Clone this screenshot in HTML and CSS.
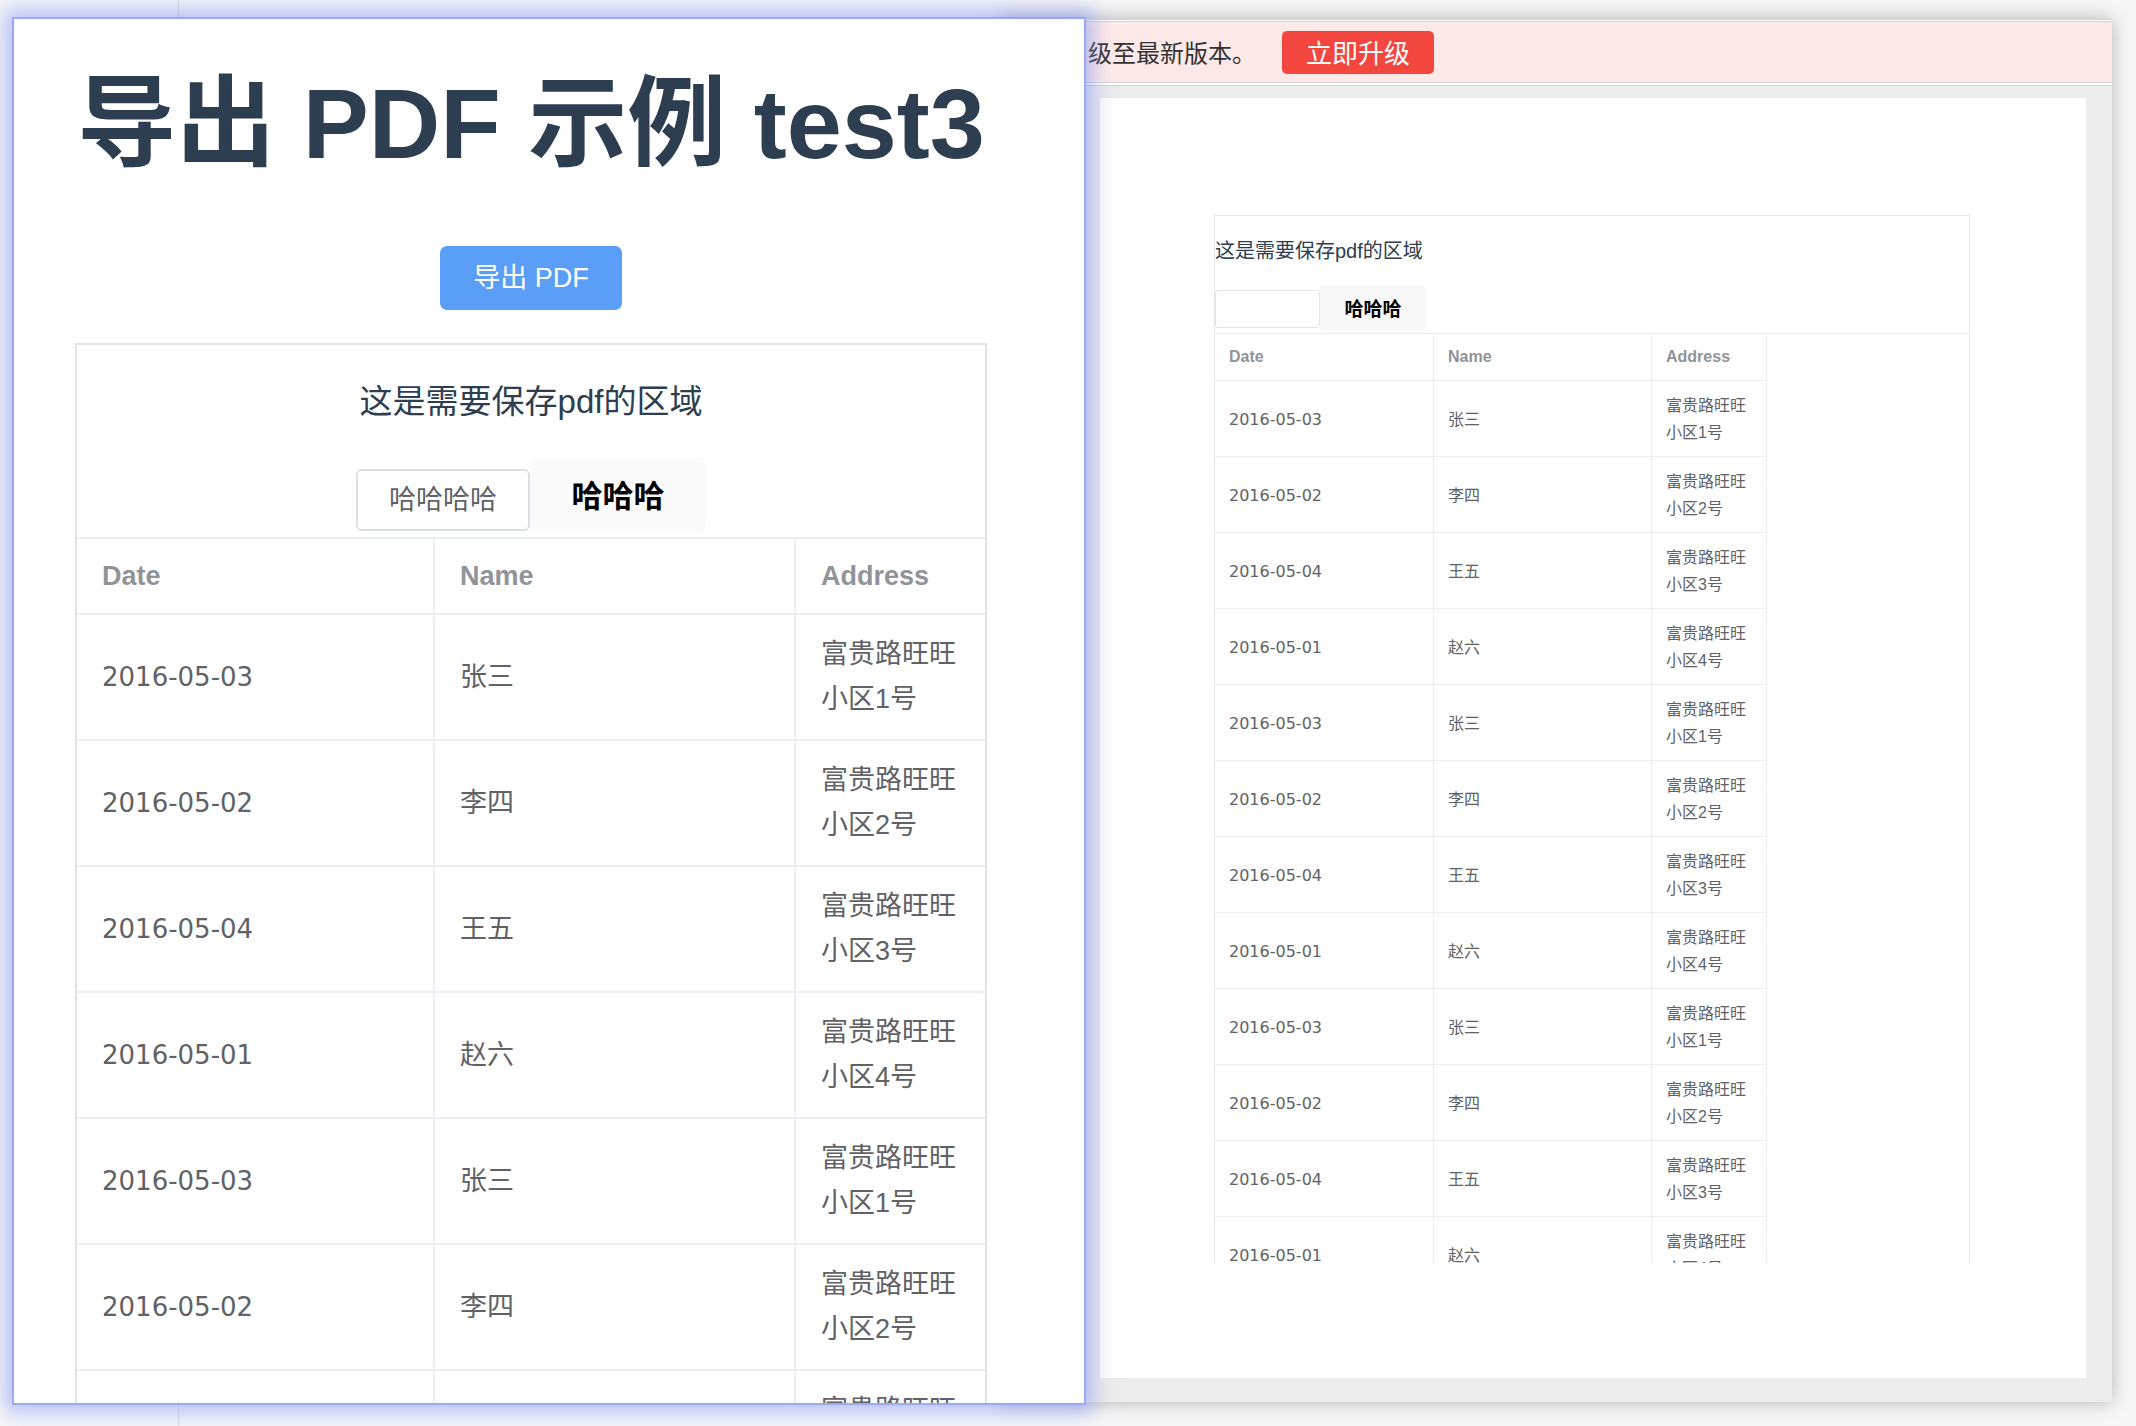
FILE: index.html
```html
<!DOCTYPE html>
<html lang="zh-CN">
<head>
<meta charset="utf-8">
<title>导出 PDF 示例</title>
<link rel="stylesheet" href="styles.css">
</head>
<body>
<div class="desktop">

  <section class="preview-window">
    <div class="pv-chrome">
      <div class="banner">
        <span class="banner-text">级至最新版本。</span>
        <button class="banner-btn">立即升级</button>
      </div>
    </div>
    <div class="pv-body">
      <div class="pv-page">
        <div class="pv-canvas">
          <p class="pv-title">这是需要保存pdf的区域</p>
          <div class="pv-tabs">
            <span class="pv-tab-blank"></span>
            <span class="pv-tab-active">哈哈哈</span>
          </div>
          <div class="pv-table-wrap">
            <table class="pv-table">
              <colgroup><col class="pv-c1"><col class="pv-c2"><col class="pv-c3"></colgroup>
              <thead><tr><th>Date</th><th>Name</th><th>Address</th></tr></thead>
              <tbody>
                <tr><td class="date">2016-05-03</td><td>张三</td><td>富贵路旺旺小区1号</td></tr>
                <tr><td class="date">2016-05-02</td><td>李四</td><td>富贵路旺旺小区2号</td></tr>
                <tr><td class="date">2016-05-04</td><td>王五</td><td>富贵路旺旺小区3号</td></tr>
                <tr><td class="date">2016-05-01</td><td>赵六</td><td>富贵路旺旺小区4号</td></tr>
                <tr><td class="date">2016-05-03</td><td>张三</td><td>富贵路旺旺小区1号</td></tr>
                <tr><td class="date">2016-05-02</td><td>李四</td><td>富贵路旺旺小区2号</td></tr>
                <tr><td class="date">2016-05-04</td><td>王五</td><td>富贵路旺旺小区3号</td></tr>
                <tr><td class="date">2016-05-01</td><td>赵六</td><td>富贵路旺旺小区4号</td></tr>
                <tr><td class="date">2016-05-03</td><td>张三</td><td>富贵路旺旺小区1号</td></tr>
                <tr><td class="date">2016-05-02</td><td>李四</td><td>富贵路旺旺小区2号</td></tr>
                <tr><td class="date">2016-05-04</td><td>王五</td><td>富贵路旺旺小区3号</td></tr>
                <tr><td class="date">2016-05-01</td><td>赵六</td><td>富贵路旺旺小区4号</td></tr>
              </tbody>
            </table>
          </div>
        </div>
      </div>
    </div>
  </section>

  <section class="app-window">
    <div class="app">
      <h1 class="app-title">导出 PDF 示例 test3</h1>
      <button class="export-btn">导出 PDF</button>
      <div class="pdf-box">
        <p class="pdf-box-title">这是需要保存pdf的区域</p>
        <div class="tabs">
          <span class="tab">哈哈哈哈</span>
          <span class="tab tab-active">哈哈哈</span>
        </div>
        <table class="data-table">
          <colgroup><col class="c1"><col class="c2"><col class="c3"></colgroup>
          <thead><tr><th>Date</th><th>Name</th><th>Address</th></tr></thead>
          <tbody>
            <tr><td class="date">2016-05-03</td><td>张三</td><td>富贵路旺旺小区1号</td></tr>
            <tr><td class="date">2016-05-02</td><td>李四</td><td>富贵路旺旺小区2号</td></tr>
            <tr><td class="date">2016-05-04</td><td>王五</td><td>富贵路旺旺小区3号</td></tr>
            <tr><td class="date">2016-05-01</td><td>赵六</td><td>富贵路旺旺小区4号</td></tr>
            <tr><td class="date">2016-05-03</td><td>张三</td><td>富贵路旺旺小区1号</td></tr>
            <tr><td class="date">2016-05-02</td><td>李四</td><td>富贵路旺旺小区2号</td></tr>
            <tr><td class="date">2016-05-04</td><td>王五</td><td>富贵路旺旺小区3号</td></tr>
          </tbody>
        </table>
      </div>
    </div>
  </section>

</div>
</body>
</html>
```

FILE: styles.css
```css
* { box-sizing: border-box; }

html, body { margin: 0; padding: 0; }

body {
  width: 2136px;
  height: 1426px;
  overflow: hidden;
  font-family: "Liberation Sans", "Noto Sans CJK SC", sans-serif;
  background:
    linear-gradient(to right, transparent 178px, #dcdcdc 178px, #dcdcdc 179px, transparent 179px),
    #f7f7f8;
}

.desktop {
  position: relative;
  width: 2136px;
  height: 1426px;
}

/* ---------- left window (app) ---------- */
.app-window {
  position: absolute;
  left: 14px;
  top: 19px;
  width: 1070px;
  height: 1384px;
  background: #fff;
  overflow: hidden;
  z-index: 2;
  box-shadow: 0 0 0 2px rgba(150, 166, 246, 0.9), 0 0 20px 9px rgba(122, 142, 240, 0.55);
}

.app {
  width: 1034px;
  padding-top: 45px;
  text-align: center;
  color: #2c3e50;
}

.app-title {
  margin: 0;
  font-size: 99px;
  line-height: 119px;
  font-weight: 700;
  color: #2c3e50;
}

.export-btn {
  display: block;
  margin: 63px auto 0;
  width: 182px;
  height: 64px;
  padding: 0;
  border: 0;
  border-radius: 7px;
  background: #5a9ef7;
  color: #fff;
  font-family: inherit;
  font-size: 27px;
  line-height: 64px;
}

.pdf-box {
  margin: 33px 0 0 61px;
  width: 912px;
  border: 2px solid #e3e3e3;
  border-bottom: 0;
}

.pdf-box-title {
  margin: 0;
  padding-top: 32px;
  font-size: 33px;
  line-height: 50px;
  color: #2c3e50;
}

.tabs {
  display: flex;
  justify-content: center;
  align-items: flex-end;
  margin-top: 30px;
  margin-bottom: 5px;
}

.tab {
  width: 174px;
  height: 62px;
  margin-bottom: 1px;
  border: 2px solid #dcdfe6;
  border-radius: 6px;
  background: #fff;
  font-size: 27px;
  line-height: 58px;
  color: #606266;
}

.tab-active {
  width: 176px;
  height: 75px;
  margin-bottom: 0;
  border: 0;
  border-radius: 8px;
  background: #fafafa;
  font-size: 31px;
  line-height: 80px;
  font-weight: 700;
  color: #000;
}

.data-table {
  width: 100%;
  table-layout: fixed;
  border-collapse: separate;
  border-spacing: 0;
  text-align: left;
}

.c1 { width: 358px; }
.c2 { width: 361px; }
.c3 { width: 189px; }

.data-table th {
  padding: 0 25px;
  border-top: 2px solid #ebeef5;
  border-bottom: 2px solid #ebeef5;
  border-right: 2px solid #ebeef5;
  font-size: 27px;
  line-height: 74px;
  font-weight: 700;
  color: #909399;
}

.data-table td {
  padding: 17px 25px;
  border-bottom: 2px solid #ebeef5;
  border-right: 2px solid #ebeef5;
  font-size: 27px;
  line-height: 45px;
  color: #606266;
  vertical-align: middle;
}

.data-table th:last-child,
.data-table td:last-child { border-right: 0; }

.data-table td.date,
.pv-table td.date {
  font-family: "DejaVu Sans", "Noto Sans CJK SC", sans-serif;
}

.data-table td.date { font-size: 26px; }

/* ---------- right window (pdf preview) ---------- */
.preview-window {
  position: absolute;
  left: 1000px;
  top: 19px;
  width: 1112px;
  height: 1383px;
  background: #ececec;
  overflow: hidden;
  z-index: 1;
  box-shadow: 0 0 18px rgba(0, 0, 0, 0.28);
}

.pv-chrome {
  background: #fff;
  border-top: 1px solid #d4d4d4;
  border-bottom: 1px solid #d4d4d4;
  padding: 1px 0 2px;
}

.banner {
  display: flex;
  align-items: center;
  height: 62px;
  padding-left: 88px;
  background: #fde9e7;
  border-top: 1px solid #d4d4d4;
  border-bottom: 1px solid #d4d4d4;
}

.banner-text {
  margin-top: 4px;
  font-size: 24px;
  line-height: 1;
  color: #333;
}

.banner-btn {
  margin-left: 26px;
  width: 152px;
  height: 43px;
  padding: 0;
  border: 0;
  border-radius: 5px;
  background: #f2463e;
  color: #fff;
  font-family: inherit;
  font-size: 26px;
  line-height: 46px;
}

.pv-body {
  padding: 12px 26px 0 100px;
}

.pv-page {
  height: 1280px;
  background: #fff;
  padding: 117px 116px 0 114px;
}

.pv-canvas {
  height: 1048px;
  overflow: hidden;
  border: 1px solid #e6e6e6;
  border-bottom: 0;
}

.pv-title {
  margin: 0;
  padding-top: 20px;
  font-size: 20px;
  line-height: 30px;
  color: #2c3e50;
}

.pv-tabs {
  display: flex;
  align-items: flex-end;
  margin-top: 19px;
  margin-bottom: 3px;
}

.pv-tab-blank {
  width: 105px;
  height: 38px;
  margin-bottom: 2px;
  border: 1px solid #e4e4e4;
  border-radius: 3px;
  background: #fff;
}

.pv-tab-active {
  width: 106px;
  height: 45px;
  border-radius: 4px;
  background: #f8f8f8;
  font-size: 19px;
  line-height: 50px;
  font-weight: 700;
  color: #000;
  text-align: center;
}

.pv-table-wrap {
  border-top: 1px solid #ebeef5;
}

.pv-table {
  width: 552px;
  table-layout: fixed;
  border-collapse: separate;
  border-spacing: 0;
  text-align: left;
}

.pv-c1 { width: 219px; }
.pv-c2 { width: 218px; }
.pv-c3 { width: 115px; }

.pv-table th {
  padding: 0 14px;
  border-bottom: 1px solid #ebeef5;
  border-right: 1px solid #ebeef5;
  font-size: 16px;
  line-height: 46px;
  font-weight: 700;
  color: #909399;
}

.pv-table td {
  padding: 11px 14px 10px;
  border-bottom: 1px solid #ebeef5;
  border-right: 1px solid #ebeef5;
  font-size: 16px;
  line-height: 27px;
  color: #606266;
  vertical-align: middle;
}
```
